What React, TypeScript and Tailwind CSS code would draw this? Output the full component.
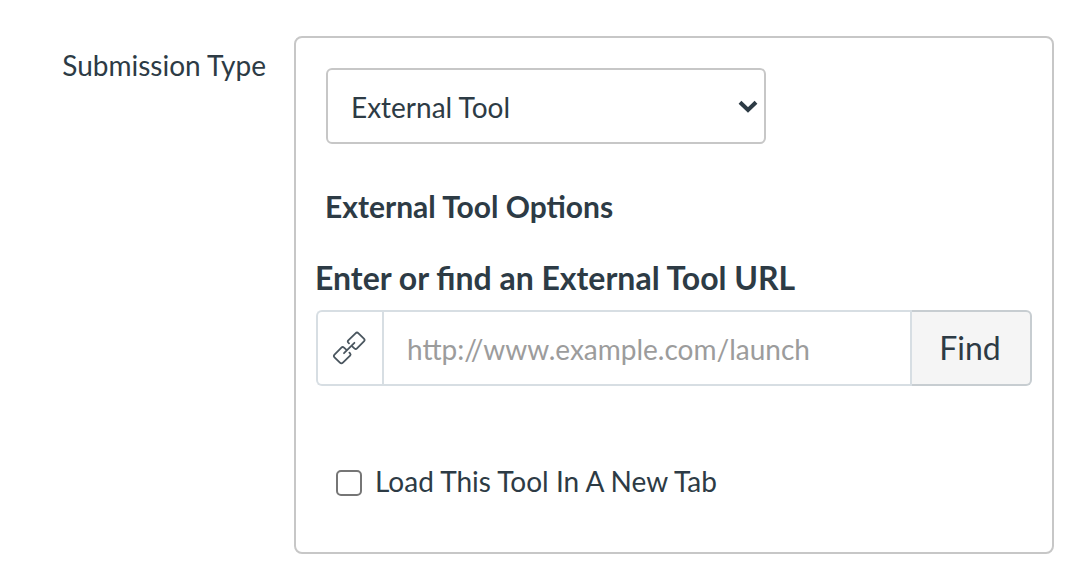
import { useState } from 'react'

function LinkIcon() {
  return (
    <svg width="34" height="34" viewBox="0 0 34 34" fill="none" stroke="#4a565f" strokeWidth="1.8" strokeLinecap="round" strokeLinejoin="round">
      <path d="M17 12.4L16.2 11.5Q15.3 10.4 16.3 9.4L23.5 2.3Q25 0.8 26.5 2.3L31.9 7.6Q33.3 9 31.9 10.4L25 17.4Q23.8 18.6 22.4 17.4L20.2 15.3" />
      <path d="M17.4 21.6L18.2 22.5Q19.1 23.6 18.1 24.6L10.9 31.7Q9.4 33.2 7.9 31.7L2.5 26.4Q1.1 25 2.5 23.6L9.4 16.6Q10.6 15.4 12 16.6L14.2 18.7" />
      <path d="M12 22.2L22.4 11.8" />
    </svg>
  )
}

export default function App() {
  const [url, setUrl] = useState('')
  const [newTab, setNewTab] = useState(false)

  return (
    <div className="flex h-[572px] w-[1078px] bg-white pt-9 font-['Lato',sans-serif] text-[28px] text-[#2d3b45]">
      <label htmlFor="submission-type" className="w-[294px] shrink-0 pt-[9px] pr-7 text-right leading-10 whitespace-nowrap">
        Submission Type
      </label>

      <div className="h-[518px] w-[760px] rounded-lg border-2 border-[#c7c7c7] pt-[30px] pl-5">
        {/* Submission type select */}
        <div className="relative ml-[10px] h-[76px] w-[440px]">
          <select
            id="submission-type"
            className="h-full w-full appearance-none rounded-md border-2 border-[#c7c7c7] bg-white pt-px pl-[23px]"
          >
            <option>External Tool</option>
          </select>
          <svg className="pointer-events-none absolute top-[31px] right-[8px]" width="20" height="15" viewBox="0 0 20 15" fill="none">
            <path d="M2 3.2L10 11L18 3.2" stroke="#2d3b45" strokeWidth="4" />
          </svg>
        </div>

        <h3 className="mt-[42px] ml-[9px] text-[30px] leading-10 font-bold">External Tool Options</h3>

        <label htmlFor="tool-url" className="mt-8 -ml-px block text-[32px] leading-10 font-bold">
          Enter or find an External Tool URL
        </label>

        {/* URL input with the find button */}
        <div className="mt-3 flex h-[76px] w-[716px]">
          <span className="flex w-[66px] items-center justify-center rounded-l-md border-2 border-r-0 border-[#d7dee3] pr-0.5">
            <LinkIcon />
          </span>
          <input
            id="tool-url"
            type="text"
            value={url}
            onChange={e => setUrl(e.target.value)}
            placeholder="http://www.example.com/launch"
            className="w-[530px] border-2 border-[#d7dee3] pt-0.5 pl-[23px] placeholder:text-[#9c9c9c]"
          />
          <button className="w-[120px] rounded-r-md border-2 border-l-0 border-[#c7cdd1] bg-[#f5f5f5] pr-0.5 text-[32px]">
            Find
          </button>
        </div>

        <label className="mt-[75px] ml-5 flex items-center gap-[13px] leading-10">
          <input
            type="checkbox"
            checked={newTab}
            onChange={e => setNewTab(e.target.checked)}
            className="mt-1 size-[26px] appearance-none rounded-[5px] border-2 border-[#767676] bg-white checked:bg-[#2d3b45]"
          />
          Load This Tool In A New Tab
        </label>
      </div>
    </div>
  )
}
